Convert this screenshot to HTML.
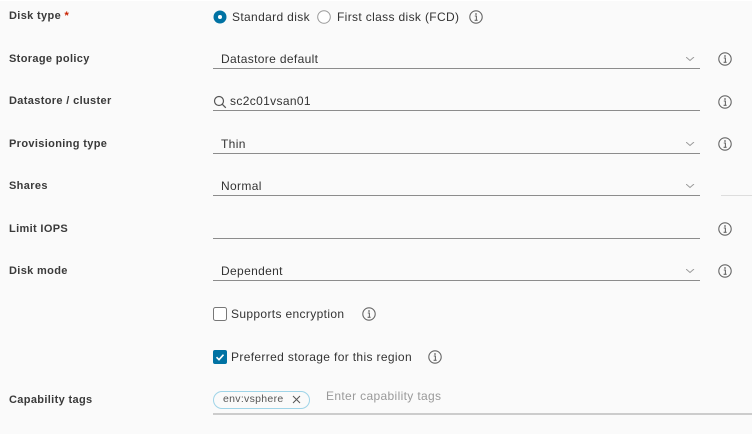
<!DOCTYPE html>
<html><head><meta charset="utf-8"><style>
html,body{margin:0;padding:0}
body{width:754px;height:433px;background:#fafafa;position:relative;overflow:hidden;font-family:"Liberation Sans",sans-serif;color:#333;border-top:1px solid #fff;box-sizing:border-box}
.l{position:absolute;left:9px;font-size:11px;font-weight:bold;color:#3a3a3a;letter-spacing:0.35px}
.t{position:absolute;font-size:12px;color:#333;letter-spacing:0.35px}
.u{position:absolute;left:213px;width:487px;height:1px;background:#8c8c8c}
.i{position:absolute;width:14px;height:14px}
.r{position:absolute;right:0;top:0;width:2px;height:433px;background:#fff}
</style></head><body>
<svg width="0" height="0" style="position:absolute"><defs>
<g id="info"><circle cx="7" cy="7" r="6.2" fill="none" stroke="#666" stroke-width="1.1"/><circle cx="7" cy="4" r="0.9" fill="#666"/><path d="M5.8 6h1.6v4.2M5.6 10.3h3" fill="none" stroke="#666" stroke-width="1.1"/></g>
<g id="chev"><path d="M0 0l4 3.5 4-3.5" fill="none" stroke="#999" stroke-width="1"/></g>
</defs></svg>

<div class="l" style="top:9px">Disk type <span style="color:#c92100">*</span></div>
<svg style="position:absolute;left:213px;top:9px" width="14" height="14"><circle cx="7" cy="7" r="6.5" fill="#0072a3"/><circle cx="7" cy="7" r="2" fill="#fff"/></svg>
<div class="t" style="left:232px;top:9px">Standard disk</div>
<svg style="position:absolute;left:317px;top:9px" width="14" height="14"><circle cx="7" cy="7" r="6.3" fill="#fff" stroke="#999" stroke-width="1"/></svg>
<div class="t" style="left:337px;top:9px">First class disk (FCD)</div>
<svg class="i" style="left:469px;top:9px"><use href="#info"/></svg>

<div class="l" style="top:52px">Storage policy</div>
<div class="t" style="left:221px;top:51px">Datastore default</div>
<svg style="position:absolute;left:686px;top:56px" width="9" height="5"><use href="#chev"/></svg>
<div class="u" style="top:67px"></div>
<svg class="i" style="left:718px;top:51px"><use href="#info"/></svg>

<div class="l" style="top:94px">Datastore / cluster</div>
<svg style="position:absolute;left:213px;top:94px" width="14" height="14"><circle cx="6" cy="6" r="4.5" fill="none" stroke="#555" stroke-width="1.2"/><path d="M9.3 9.3l3.5 3.5" stroke="#555" stroke-width="1.3"/></svg>
<div class="t" style="left:230px;top:93px">sc2c01vsan01</div>
<div class="u" style="top:109px"></div>
<svg class="i" style="left:718px;top:94px"><use href="#info"/></svg>

<div class="l" style="top:137px">Provisioning type</div>
<div class="t" style="left:221px;top:136px">Thin</div>
<svg style="position:absolute;left:686px;top:141px" width="9" height="5"><use href="#chev"/></svg>
<div class="u" style="top:152px"></div>
<svg class="i" style="left:718px;top:136px"><use href="#info"/></svg>

<div class="l" style="top:179px">Shares</div>
<div class="t" style="left:221px;top:178px">Normal</div>
<svg style="position:absolute;left:686px;top:183px" width="9" height="5"><use href="#chev"/></svg>
<div class="u" style="top:194px"></div>
<div style="position:absolute;left:721px;top:194px;width:33px;height:1px;background:#ddd"></div>

<div class="l" style="top:222px">Limit IOPS</div>
<div class="u" style="top:237px"></div>
<svg class="i" style="left:718px;top:221px"><use href="#info"/></svg>

<div class="l" style="top:264px">Disk mode</div>
<div class="t" style="left:221px;top:263px">Dependent</div>
<svg style="position:absolute;left:686px;top:268px" width="9" height="5"><use href="#chev"/></svg>
<div class="u" style="top:279px"></div>
<svg class="i" style="left:718px;top:263px"><use href="#info"/></svg>

<svg style="position:absolute;left:213px;top:306px" width="14" height="14"><rect x="0.5" y="0.5" width="13" height="13" rx="2" fill="#fff" stroke="#777"/></svg>
<div class="t" style="left:231px;top:306px">Supports encryption</div>
<svg class="i" style="left:362px;top:306px"><use href="#info"/></svg>

<svg style="position:absolute;left:213px;top:349px" width="14" height="14"><rect width="14" height="14" rx="2" fill="#0072a3"/><path d="M3.5 7.2l2.5 2.5 4.5-5" fill="none" stroke="#fff" stroke-width="1.6"/></svg>
<div class="t" style="left:231px;top:349px">Preferred storage for this region</div>
<svg class="i" style="left:428px;top:349px"><use href="#info"/></svg>

<div class="l" style="top:393px">Capability tags</div>
<div style="position:absolute;left:213px;top:390px;width:97px;height:18px;border:1px solid #9fd4e8;border-radius:9px;box-sizing:border-box;background:#fafafa"></div>
<div style="position:absolute;left:223px;top:392px;font-size:10.5px;color:#555;letter-spacing:0.3px">env:vsphere</div>
<svg style="position:absolute;left:292px;top:394px" width="9" height="9"><path d="M1 1l7 7M8 1l-7 7" stroke="#555" stroke-width="1"/></svg>
<div style="position:absolute;left:326px;top:388px;font-size:12px;color:#999;letter-spacing:0.35px">Enter capability tags</div>
<div style="position:absolute;left:213px;top:412px;width:541px;height:2px;background:#ccc"></div>
<div class="r"></div>
</body></html>
